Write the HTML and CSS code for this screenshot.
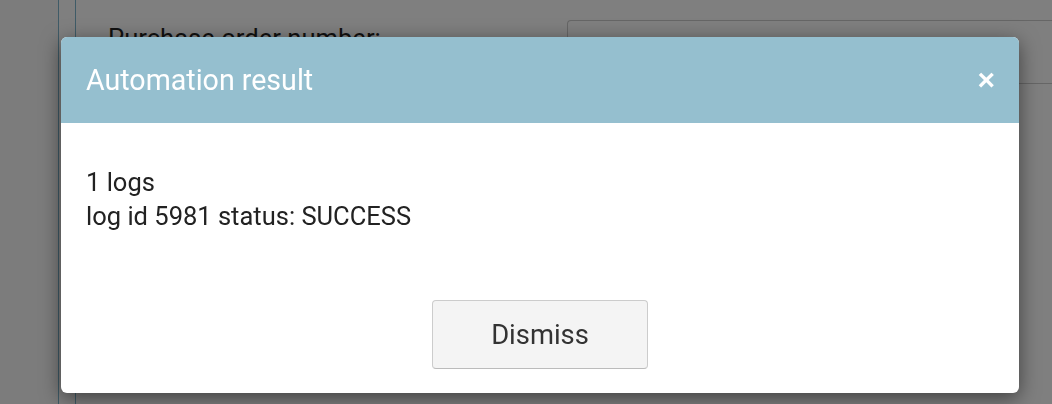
FILE: index.html
```html
<!DOCTYPE html>
<html lang="en">
<head>
    <meta charset="UTF-8">
    <title>Automation result</title>
    <link rel="stylesheet" href="styles.css">
</head>
<body>

    <div class="page">
        <div class="rail"></div>
        <div class="gutter"></div>
        <div class="form">
            <div class="form-row">
                <label class="form-label">Purchase order number:</label>
                <div class="form-input"></div>
            </div>
        </div>
    </div>

    <div class="backdrop">
        <div class="modal">
            <div class="modal-header">
                <h3 class="modal-title">Automation result</h3>
                <button class="close">&times;</button>
            </div>
            <div class="modal-body">
                <p>1 logs</p>
                <p>log id 5981 status: SUCCESS</p>
            </div>
            <div class="modal-footer">
                <button class="btn">Dismiss</button>
            </div>
        </div>
    </div>

</body>
</html>
```

FILE: styles.css
```css
body {
    font-family: Roboto, "Liberation Sans", sans-serif;
    background-color: #7f7f7f;
    margin: 0;
    height: 404px;
    overflow: hidden;
}
.page {
    display: flex;
    height: 404px;
}
.rail {
    width: 58px;
    border-right: 1px solid #3f5b67;
    background: #7c7c7c;
}
.gutter {
    width: 16px;
    border-right: 1px solid #3f5b67;
}
.form {
    flex: 1;
    padding: 20px 0 0 32px;
}
.form-row {
    display: flex;
}
.form-label {
    width: 459px;
    font-size: 25.6px;
    color: #111;
    padding-top: 3px;
}
.form-input {
    flex: 1;
    height: 62px;
    border: 1px solid #666;
    border-right: none;
    border-radius: 4px 0 0 4px;
}
.backdrop {
    position: fixed;
    top: 0;
    left: 0;
    right: 0;
    bottom: 0;
    padding: 37px 0 0 61px;
}
.modal {
    width: 958px;
    height: 356px;
    background: white;
    border-radius: 6px;
    overflow: hidden;
    box-shadow: 0 5px 20px rgba(0, 0, 0, 0.5);
    display: flex;
    flex-direction: column;
}
.modal-header {
    background: #95bfcf;
    height: 86px;
    display: flex;
    align-items: center;
    justify-content: space-between;
    padding: 0 25px;
}
.modal-title {
    margin: 0;
    font-size: 28.6px;
    font-weight: normal;
    color: white;
}
.close {
    background: none;
    border: none;
    color: white;
    font-size: 30px;
    font-weight: bold;
    padding: 0;
    margin-right: -1px;
    font-family: "Liberation Sans", sans-serif;
}
.modal-body {
    padding: 42px 25px 0;
    font-size: 25.5px;
    color: #222;
    flex: 1;
}
.modal-body p {
    margin: 0;
    line-height: 34px;
}
.modal-footer {
    display: flex;
    justify-content: center;
    padding-bottom: 24px;
}
.btn {
    width: 216px;
    height: 69px;
    background: #f4f4f4;
    border: 1px solid #ccc;
    border-bottom-color: #bbb;
    border-radius: 4px;
    font-family: Roboto, sans-serif;
    font-size: 27.4px;
    color: #333;
}
```
